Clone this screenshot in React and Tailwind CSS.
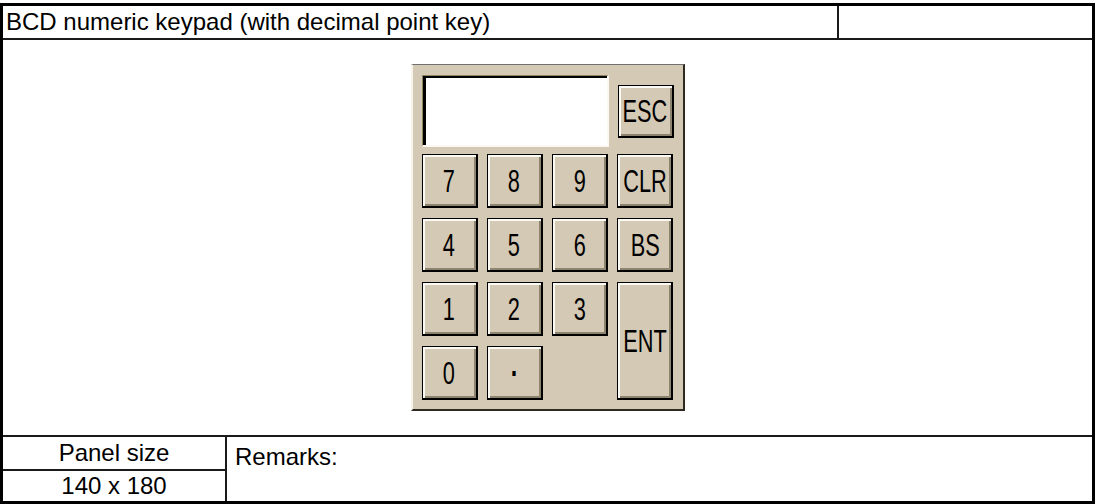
import React from "react";

function Key({ label, className = "", labelClass = "" }) {
  return (
    <div
      className={
        "flex items-center justify-center bg-[#d4c9b4] border-t border-l border-r-2 border-b-2 border-black shadow-[inset_2px_2px_0_#fbf9f4,inset_-2px_-2px_0_#8c846f] " +
        className
      }
    >
      <span
        className={
          "inline-block scale-x-[0.68] font-['Liberation_Sans',sans-serif] text-[32px] leading-none text-black " +
          labelClass
        }
      >
        {label}
      </span>
    </div>
  );
}

export default function App() {
  return (
    <div className="w-[1095px] h-[504px] bg-white pt-[3px] font-['Liberation_Sans',Arial,sans-serif] text-black">
      <div className="h-[501px] border-[3px] border-black flex flex-col">
        {/* header */}
        <div className="h-[34px] flex border-b-2 border-[#1a1a1a]">
          <div className="w-[836px] border-r-2 border-[#1a1a1a] flex items-center pl-[3px] text-[24px] leading-none">
            BCD numeric keypad (with decimal point key)
          </div>
          <div className="flex-1" />
        </div>

        {/* main */}
        <div className="flex-1 flex items-center justify-center border-b-2 border-[#1a1a1a]">
          <div className="w-[274px] h-[347px] bg-[#d4c9b4] border-t border-t-[#6f6f6f] border-l-2 border-l-[#f7f4ec] border-r-2 border-r-[#2e2a20] border-b-2 border-b-[#2e2a20] pt-[10px] pl-[9px] pr-[9px] pb-[9px] flex flex-col">
            <div className="flex items-center justify-between h-[72px]">
              <div className="w-[187px] h-[72px] border-t border-l border-t-[#8f8560] border-l-[#8f8560] border-b-2 border-r-2 border-b-[#fbf9f2] border-r-[#fbf9f2]">
                <div className="w-full h-full bg-white border-t-2 border-l-[3px] border-black" />
              </div>
              <Key label="ESC" className="w-[56px] h-[53px]" />
            </div>
            <div className="mt-[7px] grid grid-cols-[repeat(4,56px)] grid-rows-[repeat(4,54px)] gap-x-[9.33px] gap-y-[10px]">
              <Key label="7" />
              <Key label="8" />
              <Key label="9" />
              <Key label="CLR" />
              <Key label="4" />
              <Key label="5" />
              <Key label="6" />
              <Key label="BS" />
              <Key label="1" />
              <Key label="2" />
              <Key label="3" />
              <Key label="ENT" className="row-span-2" />
              <Key label="0" />
              <Key label="·" labelClass="font-bold scale-x-100 text-[34px]" />
            </div>
          </div>
        </div>

        {/* bottom */}
        <div className="h-[64px] flex text-[24px] leading-none">
          <div className="w-[224px] border-r-2 border-[#1a1a1a] flex flex-col">
            <div className="h-[34px] border-b-2 border-[#1a1a1a] flex items-center justify-center">
              Panel size
            </div>
            <div className="flex-1 flex items-center justify-center">140 x 180</div>
          </div>
          <div className="flex-1 pl-[8px] pt-[8px]">Remarks:</div>
        </div>
      </div>
    </div>
  );
}
